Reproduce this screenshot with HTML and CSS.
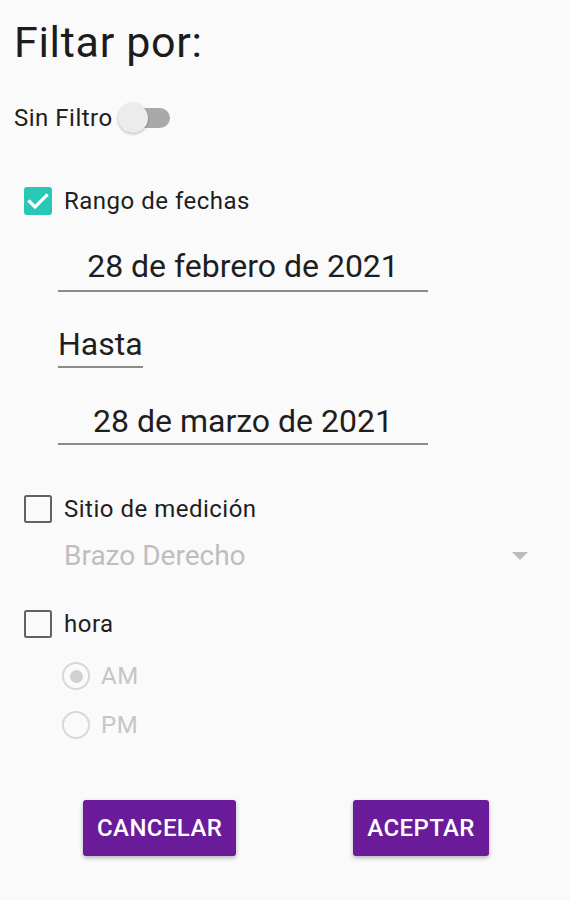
FILE: index.html
```html
<!DOCTYPE html>
<html lang="es">
<head>
<meta charset="utf-8">
<title>Filtrar</title>
<link rel="stylesheet" href="styles.css">
</head>
<body>
<div class="screen">
  <h1 class="title">Filtar por:</h1>

  <div class="switch-row">
    <span class="label">Sin Filtro</span>
    <span class="switch"><span class="track"></span><span class="thumb"></span></span>
  </div>

  <div class="check-row row-rango">
    <span class="checkbox checked">
      <svg width="28" height="28" viewBox="0 0 28 28"><polyline points="5.5,14.5 11,20 22.5,8.5" fill="none" stroke="#fff" stroke-width="3.2" stroke-linecap="square"/></svg>
    </span>
    <span class="label">Rango de fechas</span>
  </div>

  <div class="date-field date-from">28 de febrero de 2021</div>
  <div class="hasta">Hasta</div>
  <div class="date-field date-to">28 de marzo de 2021</div>

  <div class="check-row row-sitio">
    <span class="checkbox"></span>
    <span class="label">Sitio de medición</span>
  </div>

  <div class="spinner">
    <span class="spinner-text">Brazo Derecho</span>
    <svg class="spinner-arrow" width="16" height="8" viewBox="0 0 16 8"><polygon points="0,0 16,0 8,8" fill="#bdbdbd"/></svg>
  </div>

  <div class="check-row row-hora">
    <span class="checkbox"></span>
    <span class="label">hora</span>
  </div>

  <div class="radio-group">
    <div class="radio-row">
      <span class="radio selected"><span class="dot"></span></span>
      <span class="radio-label">AM</span>
    </div>
    <div class="radio-row">
      <span class="radio"></span>
      <span class="radio-label">PM</span>
    </div>
  </div>

  <div class="buttons">
    <button class="btn btn-cancel">CANCELAR</button>
    <button class="btn btn-ok">ACEPTAR</button>
  </div>
</div>
</body>
</html>
```
FILE: styles.css
```css
* { box-sizing: border-box; }

html, body {
  margin: 0;
  padding: 0;
  background: #fafafa;
}

body {
  font-family: Roboto, "Noto Sans", "Liberation Sans", sans-serif;
  color: #1e1e1e;
}

.screen {
  width: 570px;
  height: 900px;
  padding: 17px 14px 0;
  display: flex;
  flex-direction: column;
  align-items: flex-start;
}

.title {
  margin: 0;
  font-size: 43px;
  line-height: 50px;
  font-weight: 400;
  letter-spacing: 0.7px;
  color: #1c1c1c;
}

.label {
  font-size: 24px;
  line-height: 28px;
  letter-spacing: 0.5px;
  color: #1e1e1e;
}

.switch-row {
  margin-top: 36px;
  height: 30px;
  display: flex;
  align-items: center;
  gap: 5px;
}

.switch {
  display: grid;
  width: 52px;
  height: 30px;
}

.track {
  grid-area: 1 / 1;
  justify-self: end;
  align-self: center;
  width: 46px;
  height: 20px;
  border-radius: 10px;
  background: #a9a9a9;
}

.thumb {
  grid-area: 1 / 1;
  justify-self: start;
  width: 30px;
  height: 30px;
  border-radius: 50%;
  background: #ececec;
  box-shadow: 0 1px 3px rgba(0, 0, 0, 0.28);
}

.check-row {
  height: 28px;
  margin-left: 10px;
  display: flex;
  align-items: center;
  gap: 12px;
}

.row-rango { margin-top: 54px; }
.row-sitio { margin-top: 50px; }
.row-hora { margin-top: 38px; }

.checkbox {
  width: 28px;
  height: 28px;
  border: 2.5px solid #626262;
  border-radius: 2.5px;
  display: flex;
}

.checkbox.checked {
  border: none;
  background: #29c7b6;
  border-radius: 3px;
}

.date-field {
  margin-left: 44px;
  width: 370px;
  font-size: 32px;
  line-height: 38px;
  text-align: center;
  color: #1e1e1e;
  border-bottom: 2px solid #8a8a8a;
}

.date-from {
  margin-top: 32px;
  padding-bottom: 5px;
}

.date-to {
  margin-top: 34px;
  padding-bottom: 3px;
}

.hasta {
  margin-top: 33px;
  margin-left: 44px;
  font-size: 32px;
  line-height: 38px;
  padding-bottom: 3px;
  color: #1e1e1e;
  border-bottom: 2px solid #8a8a8a;
}

.spinner {
  margin-top: 16px;
  margin-left: 50px;
  width: 464px;
  display: flex;
  align-items: center;
  justify-content: space-between;
}

.spinner-text {
  font-size: 28px;
  line-height: 33px;
  color: #bebebe;
}

.spinner-arrow {
  display: block;
}

.radio-group {
  margin-top: 24px;
  margin-left: 48px;
  display: flex;
  flex-direction: column;
  gap: 21px;
}

.radio-row {
  height: 28px;
  display: flex;
  align-items: center;
  gap: 11px;
}

.radio {
  width: 28px;
  height: 28px;
  border: 2.5px solid #d8d8d8;
  border-radius: 50%;
  display: flex;
  align-items: center;
  justify-content: center;
}

.dot {
  width: 13px;
  height: 13px;
  border-radius: 50%;
  background: #d0d0d0;
}

.radio-label {
  font-size: 24px;
  line-height: 28px;
  letter-spacing: 0.5px;
  color: #c6c6c6;
}

.buttons {
  margin-top: 61px;
  margin-left: 69px;
  display: flex;
  gap: 117px;
}

.btn {
  height: 56px;
  padding: 0 14px;
  border: none;
  border-radius: 3px;
  background: #6a1b9a;
  color: #ffffff;
  font-family: Roboto, "Noto Sans", "Liberation Sans", sans-serif;
  font-size: 24px;
  font-weight: 500;
  letter-spacing: 0.4px;
  box-shadow: 0 2px 4px rgba(0, 0, 0, 0.28);
}
```
